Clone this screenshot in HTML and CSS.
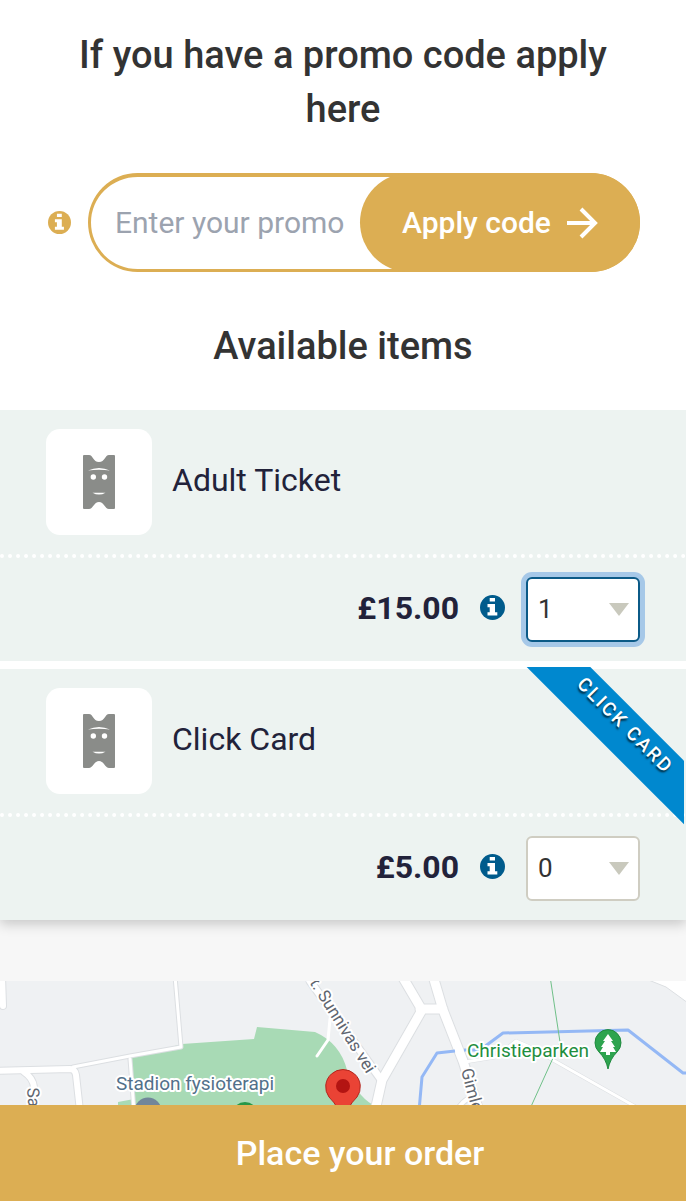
FILE: index.html
```html
<!DOCTYPE html>
<html lang="en">
<head>
  <meta charset="UTF-8">
  <meta name="viewport" content="width=device-width, initial-scale=1">
  <title>Place your order</title>
  <link rel="stylesheet" href="styles.css">
</head>
<body>

  <!-- shared icons -->
  <svg class="sprite" aria-hidden="true">
    <symbol id="icon-info" viewBox="0 0 25 25">
      <circle cx="12.5" cy="12.5" r="12.5" fill="currentColor"/>
      <path fill="#fff" d="M9.700 3h5.300v3.600H9.700zM7.500 9h7.500v8.200h2.300v3.200H7.500v-3.200h2.200v-5H7.500z"/>
    </symbol>
    <symbol id="icon-ticket" viewBox="0 0 32 54">
      <path fill="#8a8c89" d="M1 0h5C10 0 10 7 16 7S22 0 26 0h5q1 0 1 1v52q0 1-1 1h-5c-4 0-5-7-10-7S10 54 6 54H1q-1 0-1-1V1Q0 0 1 0z"/>
      <g fill="#fff">
        <path d="M5 15.500Q16 10.500 27 15.500Q16 14 5 15.500z"/>
        <circle cx="10.300" cy="22" r="2.700"/>
        <circle cx="21.500" cy="22" r="2.700"/>
        <path d="M9.500 37.700h13Q16 41.500 9.500 37.700z"/>
      </g>
    </symbol>
  </svg>

  <main class="order">
    <h2>If you have a promo code apply here</h2>

    <form class="promo">
      <svg class="info"><use href="#icon-info"/></svg>
      <div class="promo-field">
        <input type="text" id="promo" placeholder="Enter your promo code" aria-label="Promo code">
        <button type="button">Apply code
          <svg viewBox="0 0 32 32" fill="none" stroke="currentColor" stroke-width="4"><path d="M1 16h28M15 2l14 14-14 14"/></svg>
        </button>
      </div>
    </form>

    <h2>Available items</h2>

    <div class="items">
      <section class="item">
        <div class="item-name">
          <div class="thumb"><svg><use href="#icon-ticket"/></svg></div>
          <label for="qtyAdult">Adult Ticket</label>
        </div>
        <div class="item-price">
          <strong>£15.00</strong>
          <svg class="info"><use href="#icon-info"/></svg>
          <div class="qty active">
            <select id="qtyAdult">
              <option>0</option>
              <option selected>1</option>
              <option>2</option>
              <option>3</option>
            </select>
          </div>
        </div>
      </section>

      <section class="item">
        <div class="ribbon"><span>CLICK CARD</span></div>
        <div class="item-name">
          <div class="thumb"><svg><use href="#icon-ticket"/></svg></div>
          <label for="qtyClick">Click Card</label>
        </div>
        <div class="item-price">
          <strong>£5.00</strong>
          <svg class="info"><use href="#icon-info"/></svg>
          <div class="qty">
            <select id="qtyClick">
              <option selected>0</option>
              <option>1</option>
              <option>2</option>
              <option>3</option>
            </select>
          </div>
        </div>
      </section>
    </div>
  </main>

  <!-- Map -->
  <div class="map">
    <svg viewBox="0 0 686 124" preserveAspectRatio="xMidYMin slice" role="img" aria-label="Venue map">
      <path class="park" d="M131 77L182 63L254 58L257 46L315 51Q340 62 347 89Q356 114 373 124H118V121L134 118z"/>

      <g class="road-edge">
        <path stroke-width="8" d="M2-5L3 25M-5 90L70 88Q75 88 76 94L80 130M24 91Q33 97 34 106L35 130"/>
        <path stroke-width="5" d="M73 86L130 75L181 66L175-5M130 78L134 130"/>
        <path stroke-width="11" d="M375 130L382 99L422 29L402-5M420 28H443M433-5L443 29L463 80L479 130"/>
        <path stroke-width="9" d="M310 0L382 100"/>
        <path stroke-width="6" d="M457 130Q462 119 474 115"/>
        <path stroke-width="4" d="M465 81L496 76L516 60L530 66L636 126"/>
      </g>
      <g class="road">
        <path stroke-width="6" d="M2-5L3 25M-5 90L70 88Q75 88 76 94L80 130M24 91Q33 97 34 106L35 130"/>
        <path stroke-width="3" d="M73 86L130 75L181 66L175-5M130 78L134 130M330 38L328 59L317 75"/>
        <path stroke-width="9" d="M375 130L382 99L422 29L402-5M420 28H443M433-5L443 29L463 80L479 130"/>
        <path stroke-width="7" d="M310 0L382 100"/>
        <path stroke-width="4" d="M457 130Q462 119 474 115"/>
        <path stroke-width="3" d="M465 81L496 76L516 60L530 66L636 126"/>
      </g>
      <path fill="#fff" stroke="#dcdfe2" d="M646-2L666 6L688 22V-2z"/>

      <path class="river" d="M419 130L422 96L437 72L455 70M464 69H480L503 52L628 49L683 92H690"/>
      <path class="trail" d="M550-5L560 61L553 77L529 130"/>

      <circle cx="148" cy="130" r="13.500" fill="#72869a"/>
      <circle cx="245" cy="134" r="13" fill="#279747"/>

      <text class="label street" transform="translate(304 -7) rotate(58)">St. Sunnivas vei</text>
      <text class="label street" transform="translate(461 89) rotate(75)">Gimle</text>
      <text class="label street" transform="translate(27 107) rotate(86)">Sa</text>
      <text class="label place" x="116" y="109">Stadion fysioterapi</text>
      <text class="label green" x="467" y="76">Christieparken</text>

      <path fill="#2ea44f" stroke="#1f8a3e" d="M608 88Q606 78 599 71A13 13 0 1 1 617 71Q610 78 608 88z"/>
      <path fill="#fff" d="M608 53l5 7h-2l4 6h-2l3 5h-6v3h-4v-3h-6l3-5h-2l4-6h-2z"/>
      <path fill="#ea4335" stroke="#b3261e" d="M343 140Q339 126 329 116A17.300 17.300 0 1 1 357 116Q347 126 343 140z"/>
      <circle cx="343" cy="105" r="7" fill="#b31412"/>
    </svg>
  </div>

  <button type="button" class="place-order">Place your order</button>

</body>
</html>
```

FILE: styles.css
```css
* { box-sizing: border-box; }

body {
  margin: 0;
  min-height: 100vh;
  display: flex;
  flex-direction: column;
  background: #f7f7f7;
  color: #333;
  font-family: Roboto, "Liberation Sans", sans-serif;
}

button, input, select { font-family: inherit; }
.sprite { display: none; }

.order {
  background: #fff;
  margin-bottom: 61px;
  box-shadow: 0 4px 12px rgba(0, 0, 0, 0.2);
}

h2 {
  margin: 0;
  padding: 28px 46px 37px;
  font-size: 38px;
  line-height: 54px;
  font-weight: 500;
  text-align: center;
}

/* Promo code */
.promo {
  display: flex;
  align-items: center;
  gap: 17px;
  padding: 0 46px 0 48px;
  margin-bottom: 19px;
}

.info {
  flex: none;
  width: 25px;
  height: 25px;
  color: #005b8c;
}

.promo .info {
  width: 23px;
  height: 23px;
  color: #dcae53;
}

.promo-field {
  flex: 1;
  min-width: 0;
  display: flex;
  height: 99px;
  border: 3px solid #dcae53;
  border-top-width: 4px;
  border-radius: 50px;
}

.promo-field input {
  flex: 1;
  min-width: 0;
  padding: 0 0 2px;
  margin: 0 12px 0 24px;
  border: 0;
  outline: 0;
  background: none;
  font-size: 30px;
}

.promo-field input::placeholder { color: #9ca3af; }

.promo-field button {
  flex: none;
  display: flex;
  align-items: center;
  justify-content: center;
  gap: 15px;
  width: 280px;
  margin: -4px -3px -3px 0;
  border: 0;
  border-radius: 50px;
  background: #dcae53;
  color: #fff;
  font-size: 30px;
  font-weight: 500;
}

.promo-field button svg { width: 32px; height: 32px; }

/* Items */
.items {
  display: flex;
  flex-direction: column;
  gap: 8px;
}

.item {
  position: relative;
  background: #edf3f1;
  color: #22223a;
}

.item-name {
  display: flex;
  align-items: center;
  gap: 20px;
  padding: 19px 46px;
  border-bottom: 4px dotted #fff;
  font-size: 32px;
}

.item-name label { padding-bottom: 4px; }

.thumb {
  display: flex;
  align-items: center;
  justify-content: center;
  width: 106px;
  height: 106px;
  border-radius: 14px;
  background: #fff;
}

.thumb svg { width: 32px; height: 54px; }

.item-price {
  display: flex;
  align-items: center;
  justify-content: flex-end;
  gap: 21px;
  padding: 19px 46px;
  font-size: 32px;
}

.item-price strong,
.item-price .info { margin-bottom: 4px; }

.qty { position: relative; }

.qty::after {
  content: "";
  position: absolute;
  top: 26px;
  right: 11px;
  border: 10px solid transparent;
  border-top: 13px solid #c9c9bd;
  border-bottom: 0;
  pointer-events: none;
}

.qty select {
  display: block;
  appearance: none;
  width: 114px;
  height: 65px;
  padding: 0 10px 2px;
  border: 2px solid #cfcdc2;
  border-radius: 6px;
  background: #fff;
  color: #333;
  font-size: 26px;
}

.qty.active select {
  border-color: #0b5a87;
  box-shadow: 0 0 0 5px #a6c8e8;
}

/* Corner ribbon */
.ribbon {
  position: absolute;
  top: -2px;
  right: 2px;
  width: 158px;
  height: 158px;
  overflow: hidden;
}

.ribbon span {
  position: absolute;
  top: 40px;
  left: -20px;
  width: 230px;
  height: 45px;
  background: #0088cf;
  color: #fff;
  font-size: 19px;
  font-weight: 500;
  line-height: 34px;
  letter-spacing: 2px;
  text-align: center;
  text-shadow: 1px 2px 2px rgba(0, 0, 0, 0.7);
  transform: rotate(45deg);
}

/* Map */
.map {
  flex: 1;
  display: flex;
  min-height: 124px;
  background: #eff1f3;
}

.map svg { width: 100%; height: 100%; }
.park { fill: #a8dab5; }
.road, .road-edge, .river, .trail { fill: none; stroke-linejoin: round; }
.road { stroke: #fff; stroke-linecap: round; }
.road-edge { stroke: #dcdfe2; stroke-linecap: round; }
.river { stroke: #94b8f5; stroke-width: 3px; }
.trail { stroke: #6fc088; stroke-width: 1px; }

.label {
  font-size: 19px;
  stroke: #fff;
  stroke-width: 4px;
  stroke-linejoin: round;
  paint-order: stroke;
}

.street { font-size: 17px; fill: #5f6670; }
.place { fill: #52708a; }
.green { fill: #1e8e3e; }

.place-order {
  position: sticky;
  bottom: 0;
  height: 96px;
  padding: 0 0 0 34px;
  border: 0;
  background: #dcae53;
  color: #fff;
  font-size: 34px;
  font-weight: 500;
}
```
